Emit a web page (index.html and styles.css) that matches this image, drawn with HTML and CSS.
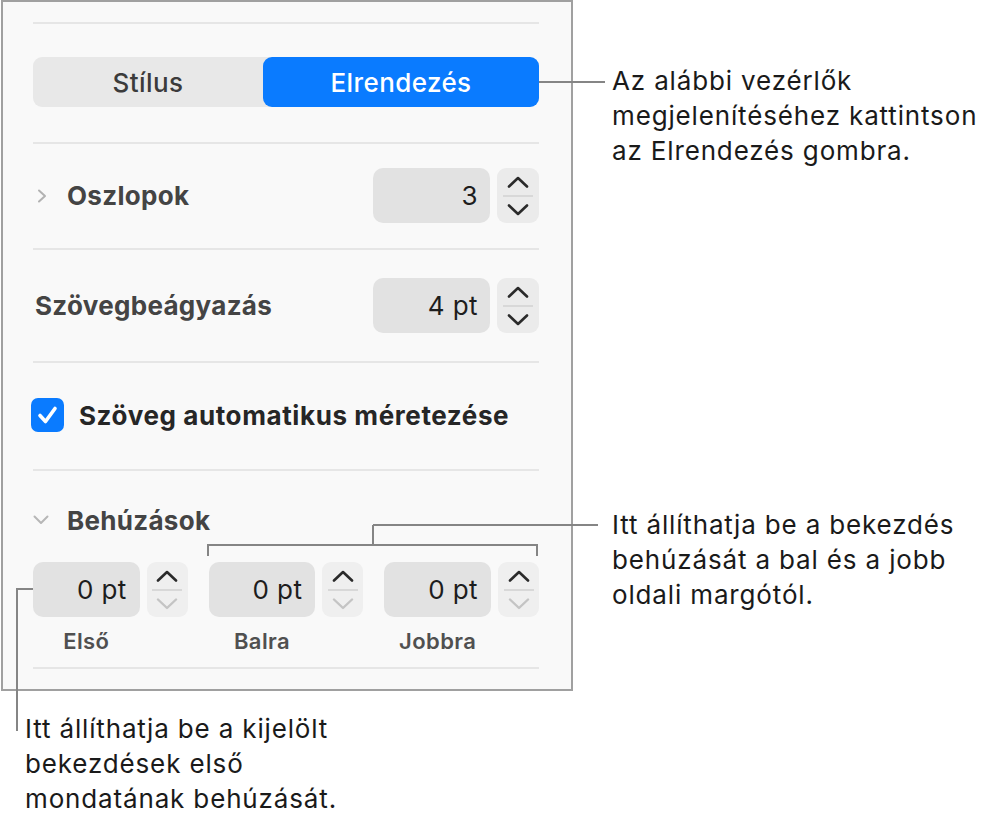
FILE: index.html
```html
<!DOCTYPE html>
<html lang="hu">
<head>
<meta charset="utf-8">
<title>Szövegbeállítások – Elrendezés</title>
<link rel="stylesheet" href="styles.css">
</head>
<body>
<div class="canvas">
  <aside class="panel">
    <div class="sep"></div>

    <div class="segmented">
      <span class="seg">Stílus</span>
      <span class="seg active">Elrendezés</span>
    </div>

    <div class="sep sep-seg"></div>

    <div class="row row-cols">
      <span class="disclosure">
        <svg width="10" height="14" viewBox="0 0 10 14"><path d="M2 1.5 L8 7 L2 12.5" fill="none" stroke="#b2b2b2" stroke-width="2" stroke-linecap="round" stroke-linejoin="round"/></svg>
      </span>
      <span class="label">Oszlopok</span>
      <div class="num">
        <span class="field">3</span>
        <span class="stepper">
          <svg class="chev" width="22" height="12" viewBox="0 0 22 12"><path d="M2 10.5 L11 2 L20 10.5" fill="none" stroke="#2a2a2a" stroke-width="2.6" stroke-linecap="round" stroke-linejoin="round"/></svg>
          <span class="divider"></span>
          <svg class="chev" width="22" height="12" viewBox="0 0 22 12"><path d="M2 1.5 L11 10 L20 1.5" fill="none" stroke="#2a2a2a" stroke-width="2.6" stroke-linecap="round" stroke-linejoin="round"/></svg>
        </span>
      </div>
    </div>

    <div class="sep sep-cols"></div>

    <div class="row row-inset">
      <span class="label plain">Szövegbeágyazás</span>
      <div class="num">
        <span class="field">4 pt</span>
        <span class="stepper">
          <svg class="chev" width="22" height="12" viewBox="0 0 22 12"><path d="M2 10.5 L11 2 L20 10.5" fill="none" stroke="#2a2a2a" stroke-width="2.6" stroke-linecap="round" stroke-linejoin="round"/></svg>
          <span class="divider"></span>
          <svg class="chev" width="22" height="12" viewBox="0 0 22 12"><path d="M2 1.5 L11 10 L20 1.5" fill="none" stroke="#2a2a2a" stroke-width="2.6" stroke-linecap="round" stroke-linejoin="round"/></svg>
        </span>
      </div>
    </div>

    <div class="sep sep-inset"></div>

    <div class="check-row">
      <span class="check">
        <svg width="33" height="34" viewBox="0 0 33 34"><path d="M9 17.5 L14.5 23.5 L24 10.5" fill="none" stroke="#fff" stroke-width="3.6" stroke-linecap="round" stroke-linejoin="round"/></svg>
      </span>
      <span class="check-label">Szöveg automatikus méretezése</span>
    </div>

    <div class="sep sep-check"></div>

    <div class="section-head">
      <span class="disclosure open">
        <svg width="16" height="10" viewBox="0 0 16 10"><path d="M1.5 1.5 L8 8 L14.5 1.5" fill="none" stroke="#b7b7b7" stroke-width="2" stroke-linecap="round" stroke-linejoin="round"/></svg>
      </span>
      <span class="label">Behúzások</span>
    </div>

    <div class="indents">
      <div class="num small">
        <span class="field">0 pt</span>
        <span class="stepper light">
          <svg class="chev" width="22" height="12" viewBox="0 0 22 12"><path d="M2 10.5 L11 2 L20 10.5" fill="none" stroke="#2a2a2a" stroke-width="2.6" stroke-linecap="round" stroke-linejoin="round"/></svg>
          <span class="divider"></span>
          <svg class="chev" width="22" height="12" viewBox="0 0 22 12"><path d="M2 1.5 L11 10 L20 1.5" fill="none" stroke="#c4c4c4" stroke-width="2.4" stroke-linecap="round" stroke-linejoin="round"/></svg>
        </span>
      </div>
      <div class="num small">
        <span class="field">0 pt</span>
        <span class="stepper light">
          <svg class="chev" width="22" height="12" viewBox="0 0 22 12"><path d="M2 10.5 L11 2 L20 10.5" fill="none" stroke="#2a2a2a" stroke-width="2.6" stroke-linecap="round" stroke-linejoin="round"/></svg>
          <span class="divider"></span>
          <svg class="chev" width="22" height="12" viewBox="0 0 22 12"><path d="M2 1.5 L11 10 L20 1.5" fill="none" stroke="#c4c4c4" stroke-width="2.4" stroke-linecap="round" stroke-linejoin="round"/></svg>
        </span>
      </div>
      <div class="num small">
        <span class="field">0 pt</span>
        <span class="stepper light">
          <svg class="chev" width="22" height="12" viewBox="0 0 22 12"><path d="M2 10.5 L11 2 L20 10.5" fill="none" stroke="#2a2a2a" stroke-width="2.6" stroke-linecap="round" stroke-linejoin="round"/></svg>
          <span class="divider"></span>
          <svg class="chev" width="22" height="12" viewBox="0 0 22 12"><path d="M2 1.5 L11 10 L20 1.5" fill="none" stroke="#c4c4c4" stroke-width="2.4" stroke-linecap="round" stroke-linejoin="round"/></svg>
        </span>
      </div>
      <span class="caption">Első</span>
      <span class="caption">Balra</span>
      <span class="caption">Jobbra</span>
    </div>

    <div class="sep sep-bottom"></div>
  </aside>

  <!-- leader lines for the callouts -->
  <svg class="leaders" width="995" height="819" viewBox="0 0 995 819">
    <g fill="none" stroke="#858585" stroke-width="2">
      <path d="M539 82 H605"/>
      <path d="M373 525 H598 M373 525 V545 M208 556 V545 H537 V556"/>
      <path d="M33 589 H17 V731"/>
    </g>
  </svg>

  <p class="callout callout-tabs">Az alábbi vezérlők<br>megjelenítéséhez kattintson<br>az Elrendezés gombra.</p>
  <p class="callout callout-sides">Itt állíthatja be a bekezdés<br>behúzását a bal és a jobb<br>oldali margótól.</p>
  <p class="callout callout-first">Itt állíthatja be a kijelölt<br>bekezdések első<br>mondatának behúzását.</p>
</div>
</body>
</html>
```

FILE: styles.css
```css
html, body {
  margin: 0;
  background: #ffffff;
}

body {
  font-family: Inter, "Noto Sans", "Liberation Sans", sans-serif;
  color: #1c1c1c;
}

.canvas {
  position: relative;
  width: 995px;
  height: 819px;
  overflow: hidden;
}

/* inspector panel */
.panel {
  box-sizing: border-box;
  width: 572px;
  margin-left: 1px;
  border: 2px solid #a0a0a0;
  background: #f9f9f9;
  padding: 20px 32px 20px 30px;
}

.sep {
  height: 2px;
  background: #e6e6e6;
}

.sep-seg { margin-top: 35px; }
.sep-cols { margin-top: 25px; }
.sep-inset { margin-top: 28px; }
.sep-check { margin-top: 37px; }
.sep-bottom { margin-top: 13px; }

/* segmented control */
.segmented {
  margin-top: 33px;
  height: 50px;
  display: grid;
  grid-template-columns: 230px 1fr;
  background: #e8e8e8;
  border-radius: 9px;
}

.seg {
  display: flex;
  align-items: center;
  justify-content: center;
  font-size: 26px;
  font-weight: 500;
  letter-spacing: 0.4px;
  color: #3b3b3b;
}

.seg.active {
  background: #0a7bff;
  color: #ffffff;
  border-radius: 9px;
}

/* rows with a number field */
.row {
  display: flex;
  align-items: center;
  height: 55px;
}

.row-cols { margin-top: 24px; }
.row-inset { margin-top: 28px; }

.disclosure {
  display: flex;
  align-items: center;
  width: 30px;
  padding-left: 4px;
}

.disclosure.open {
  padding-left: 0;
  width: 34px;
}

.label {
  font-size: 26px;
  font-weight: 700;
  letter-spacing: 0.3px;
  color: #444444;
}

.label.plain {
  padding-left: 2px;
}

.num {
  display: flex;
  gap: 7px;
  margin-left: auto;
}

.field {
  box-sizing: border-box;
  width: 117px;
  height: 55px;
  display: flex;
  align-items: center;
  justify-content: flex-end;
  padding-right: 12px;
  background: #e2e2e2;
  border-radius: 10px;
  font-size: 26px;
  letter-spacing: 0.4px;
  color: #1d1d1d;
}

.stepper {
  width: 42px;
  height: 55px;
  display: flex;
  flex-direction: column;
  align-items: center;
  justify-content: center;
  gap: 7px;
  background: #ebebeb;
  border-radius: 9px;
}

.stepper.light {
  background: #efefef;
}

.chev {
  display: block;
}

.divider {
  width: 30px;
  height: 2px;
  background: #d8d8d8;
}

/* checkbox */
.check-row {
  display: flex;
  align-items: center;
  margin-top: 35px;
  height: 34px;
}

.check {
  width: 33px;
  height: 34px;
  margin-left: -2px;
  background: #0a7bff;
  border-radius: 7px;
}

.check svg {
  display: block;
}

.check-label {
  margin-left: 15px;
  font-size: 26px;
  font-weight: 700;
  letter-spacing: 0.6px;
  color: #262626;
}

/* indents */
.section-head {
  display: flex;
  align-items: center;
  height: 30px;
  margin-top: 34px;
}

.indents {
  margin-top: 27px;
  display: grid;
  grid-template-columns: repeat(3, 1fr);
  column-gap: 21px;
  row-gap: 11px;
}

.num.small {
  margin-left: 0;
}

.num.small .field {
  flex: 1;
  width: auto;
  padding-right: 13px;
}

.num.small .stepper {
  width: 41px;
}

.caption {
  width: calc(100% - 48px);
  text-align: center;
  font-size: 22px;
  font-weight: 600;
  letter-spacing: 0.4px;
  line-height: 26px;
  color: #505050;
}

/* callouts */
.leaders {
  position: absolute;
  left: 0;
  top: 0;
  pointer-events: none;
}

.callout {
  position: absolute;
  margin: 0;
  font-size: 26px;
  letter-spacing: 0.85px;
  line-height: 35px;
  color: #1a1a1a;
  white-space: nowrap;
}

.callout-tabs { left: 612px; top: 63px; }
.callout-sides { left: 612px; top: 507px; }
.callout-first { left: 25px; top: 711px; }
```
